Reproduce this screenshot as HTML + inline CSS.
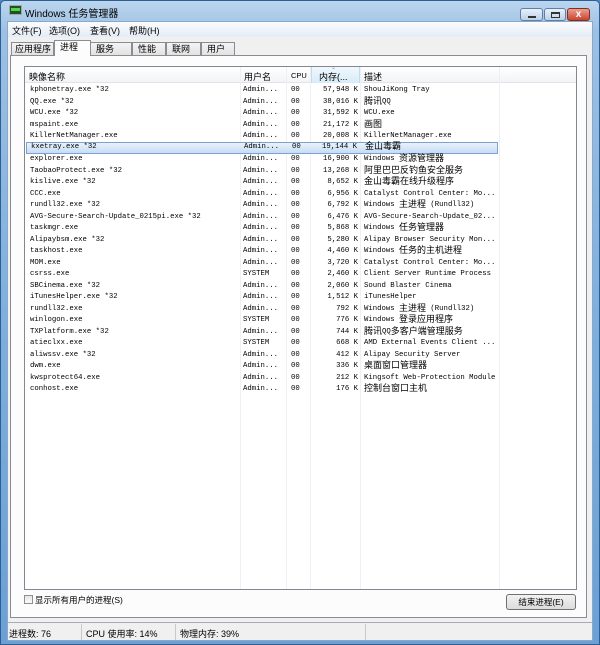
<!DOCTYPE html>
<html><head><meta charset="utf-8"><style>
*{margin:0;padding:0;box-sizing:border-box}
body{width:600px;height:645px;overflow:hidden;background:#4f86c0;font-family:"Liberation Sans","Noto Sans CJK SC",sans-serif;position:relative}
.a{position:absolute}
#frame{left:0;top:0;width:600px;height:645px;background:linear-gradient(#bcd6ee,#9cc0e4 30px,#7fb0de 300px,#6aa0d6);border:1px solid #2d5f92;border-radius:5px 5px 0 0}
#title{left:25px;top:5px;font-size:10px;color:#000}
#inner{left:7px;top:21px;width:586px;height:620px;background:#f0f0f0;border:1px solid #8aa8c8}
#menu{left:8px;top:22px;width:584px;height:15px;background:linear-gradient(#fbfcfe,#e4ecf6);font-size:9px}
#menu span{position:absolute;top:2px}
.tab{position:absolute;top:42px;height:14px;border:1px solid #898c95;border-bottom:none;background:linear-gradient(#f4f4f4,#e0e0e0);font-size:9px;line-height:12px;padding-left:3px}
#panel{left:10px;top:55px;width:577px;height:563px;background:#fcfcfc;border:1px solid #898c95}
#list{left:24px;top:66px;width:553px;height:524px;background:#fff;border:1px solid #828790}
#hdr{left:25px;top:67px;width:551px;height:16px;background:linear-gradient(#fff,#f3f4f6);border-bottom:1px solid #e0e3e8;font-size:9px}
.vl{position:absolute;top:67px;width:1px;height:522px;background:#eef0f3}
.r{position:absolute;left:26px;width:472px;height:11px;font-family:"Liberation Mono","Noto Sans CJK SC",monospace;font-size:7.3px;line-height:11px;white-space:nowrap;color:#000}
.r i{font-style:normal;position:absolute;top:0;height:11px;line-height:11px}
.r i.d{white-space:pre;display:flex;align-items:flex-start}
.r b{font-weight:normal;font-family:"Noto Sans CJK SC",sans-serif;font-size:9px;line-height:11px;height:11px;position:relative;top:-2px}
.n{left:4px}.u{left:217px}.c{left:265px}.m{right:140px;text-align:right}.d{left:338px}
.sel{background:linear-gradient(#e8f2fd,#c6dcf6);border:1px solid #7da2ce}
.sel i{top:-1px}
#btn{left:506px;top:594px;width:70px;height:16px;border:1px solid #707070;border-radius:3px;background:linear-gradient(#f2f2f2,#dcdcdc);font-size:8.5px;text-align:center;line-height:14px}
#status{left:8px;top:622px;width:584px;height:18px;background:#f0f0f0;border-top:1px solid #aab;font-size:9px}
#status span{position:absolute;top:4px}
.sd{position:absolute;top:1px;width:1px;height:16px;background:#c8c8c8}
</style></head><body>
<div id="frame" class="a"></div>
<div class="a" style="left:9px;top:5px;width:13px;height:10px;background:#2a4a2a;border:1px solid #9aa"></div>
<div class="a" style="left:11px;top:8px;width:9px;height:3px;background:#4d4"></div>
<div id="title" class="a">Windows 任务管理器</div>
<div class="a" style="left:520px;top:8px;width:23px;height:13px;border:1px solid #5f7fa8;border-radius:3px;background:linear-gradient(#e8f0fa,#bcd0e8)"><div class="a" style="left:7px;top:7px;width:8px;height:2px;background:#333"></div></div>
<div class="a" style="left:544px;top:8px;width:22px;height:13px;border:1px solid #5f7fa8;border-radius:3px;background:linear-gradient(#e8f0fa,#bcd0e8)"><div class="a" style="left:6px;top:3px;width:9px;height:6px;border:1px solid #333;border-top-width:2px"></div></div>
<div class="a" style="left:567px;top:8px;width:23px;height:13px;border:1px solid #8a2a1a;border-radius:3px;background:linear-gradient(#e8a090,#c8452e);color:#fff;font-size:10px;font-weight:bold;text-align:center;line-height:11px">x</div>
<div id="inner" class="a"></div>
<div id="menu" class="a"><span style="left:4px">文件(F)</span><span style="left:41px">选项(O)</span><span style="left:82px">查看(V)</span><span style="left:121px">帮助(H)</span></div>
<div class="tab" style="left:11px;width:43px">应用程序</div>
<div class="tab" style="left:90px;width:42px;padding-left:5px">服务</div>
<div class="tab" style="left:132px;width:34px;padding-left:5px">性能</div>
<div class="tab" style="left:166px;width:35px;padding-left:5px">联网</div>
<div class="tab" style="left:201px;width:34px;padding-left:5px">用户</div>
<div id="panel" class="a"></div>
<div class="tab" style="left:54px;top:40px;height:16px;width:37px;background:#fcfcfc;z-index:2;padding-left:5px">进程</div>
<div id="list" class="a"></div>
<div id="hdr" class="a">
<div class="a" style="left:286px;top:0;width:49px;height:16px;background:linear-gradient(#f0f8fd,#d8ecf8);border-left:1px solid #c0dcf0;border-right:1px solid #c0dcf0"></div>
<span class="a" style="left:4px;top:3px">映像名称</span><span class="a" style="left:219px;top:3px">用户名</span><span class="a" style="left:266px;top:4px;font-size:7.5px">CPU</span><span class="a" style="left:294px;top:3px">内存(...</span><span class="a" style="left:339px;top:3px">描述</span>
<span class="a" style="left:306px;top:-3px;font-size:6px;color:#6a8fb0">⌄</span>
</div>
<div class="vl" style="left:240px"></div><div class="vl" style="left:286px"></div><div class="vl" style="left:310px"></div><div class="vl" style="left:360px"></div><div class="vl" style="left:499px"></div>

<div class="r" style="top:85px"><i class="n">kphonetray.exe *32</i><i class="u">Admin...</i><i class="c">00</i><i class="m">57,948 K</i><i class="d">ShouJiKong Tray</i></div>
<div class="r" style="top:96.5px"><i class="n">QQ.exe *32</i><i class="u">Admin...</i><i class="c">00</i><i class="m">38,016 K</i><i class="d"><b>腾讯</b>QQ</i></div>
<div class="r" style="top:108px"><i class="n">WCU.exe *32</i><i class="u">Admin...</i><i class="c">00</i><i class="m">31,592 K</i><i class="d">WCU.exe</i></div>
<div class="r" style="top:119.5px"><i class="n">mspaint.exe</i><i class="u">Admin...</i><i class="c">00</i><i class="m">21,172 K</i><i class="d"><b>画图</b></i></div>
<div class="r" style="top:131px"><i class="n">KillerNetManager.exe</i><i class="u">Admin...</i><i class="c">00</i><i class="m">20,008 K</i><i class="d">KillerNetManager.exe</i></div>
<div class="r sel" style="top:142px;height:12px"><i class="n">kxetray.exe *32</i><i class="u">Admin...</i><i class="c">00</i><i class="m">19,144 K</i><i class="d"><b>金山毒霸</b></i></div>
<div class="r" style="top:154px"><i class="n">explorer.exe</i><i class="u">Admin...</i><i class="c">00</i><i class="m">16,900 K</i><i class="d">Windows <b>资源管理器</b></i></div>
<div class="r" style="top:165.5px"><i class="n">TaobaoProtect.exe *32</i><i class="u">Admin...</i><i class="c">00</i><i class="m">13,268 K</i><i class="d"><b>阿里巴巴反钓鱼安全服务</b></i></div>
<div class="r" style="top:177px"><i class="n">kislive.exe *32</i><i class="u">Admin...</i><i class="c">00</i><i class="m">8,652 K</i><i class="d"><b>金山毒霸在线升级程序</b></i></div>
<div class="r" style="top:188.5px"><i class="n">CCC.exe</i><i class="u">Admin...</i><i class="c">00</i><i class="m">6,956 K</i><i class="d">Catalyst Control Center: Mo...</i></div>
<div class="r" style="top:200px"><i class="n">rundll32.exe *32</i><i class="u">Admin...</i><i class="c">00</i><i class="m">6,792 K</i><i class="d">Windows <b>主进程</b> (Rundll32)</i></div>
<div class="r" style="top:211.5px"><i class="n">AVG-Secure-Search-Update_0215pi.exe *32</i><i class="u">Admin...</i><i class="c">00</i><i class="m">6,476 K</i><i class="d">AVG-Secure-Search-Update_02...</i></div>
<div class="r" style="top:223px"><i class="n">taskmgr.exe</i><i class="u">Admin...</i><i class="c">00</i><i class="m">5,868 K</i><i class="d">Windows <b>任务管理器</b></i></div>
<div class="r" style="top:234.5px"><i class="n">Alipaybsm.exe *32</i><i class="u">Admin...</i><i class="c">00</i><i class="m">5,280 K</i><i class="d">Alipay Browser Security Mon...</i></div>
<div class="r" style="top:246px"><i class="n">taskhost.exe</i><i class="u">Admin...</i><i class="c">00</i><i class="m">4,460 K</i><i class="d">Windows <b>任务的主机进程</b></i></div>
<div class="r" style="top:257.5px"><i class="n">MOM.exe</i><i class="u">Admin...</i><i class="c">00</i><i class="m">3,720 K</i><i class="d">Catalyst Control Center: Mo...</i></div>
<div class="r" style="top:269px"><i class="n">csrss.exe</i><i class="u">SYSTEM</i><i class="c">00</i><i class="m">2,460 K</i><i class="d">Client Server Runtime Process</i></div>
<div class="r" style="top:280.5px"><i class="n">SBCinema.exe *32</i><i class="u">Admin...</i><i class="c">00</i><i class="m">2,060 K</i><i class="d">Sound Blaster Cinema</i></div>
<div class="r" style="top:292px"><i class="n">iTunesHelper.exe *32</i><i class="u">Admin...</i><i class="c">00</i><i class="m">1,512 K</i><i class="d">iTunesHelper</i></div>
<div class="r" style="top:303.5px"><i class="n">rundll32.exe</i><i class="u">Admin...</i><i class="c">00</i><i class="m">792 K</i><i class="d">Windows <b>主进程</b> (Rundll32)</i></div>
<div class="r" style="top:315px"><i class="n">winlogon.exe</i><i class="u">SYSTEM</i><i class="c">00</i><i class="m">776 K</i><i class="d">Windows <b>登录应用程序</b></i></div>
<div class="r" style="top:326.5px"><i class="n">TXPlatform.exe *32</i><i class="u">Admin...</i><i class="c">00</i><i class="m">744 K</i><i class="d"><b>腾讯</b>QQ<b>多客户端管理服务</b></i></div>
<div class="r" style="top:338px"><i class="n">atieclxx.exe</i><i class="u">SYSTEM</i><i class="c">00</i><i class="m">668 K</i><i class="d">AMD External Events Client ...</i></div>
<div class="r" style="top:349.5px"><i class="n">aliwssv.exe *32</i><i class="u">Admin...</i><i class="c">00</i><i class="m">412 K</i><i class="d">Alipay Security Server</i></div>
<div class="r" style="top:361px"><i class="n">dwm.exe</i><i class="u">Admin...</i><i class="c">00</i><i class="m">336 K</i><i class="d"><b>桌面窗口管理器</b></i></div>
<div class="r" style="top:372.5px"><i class="n">kwsprotect64.exe</i><i class="u">Admin...</i><i class="c">00</i><i class="m">212 K</i><i class="d">Kingsoft Web-Protection Module</i></div>
<div class="r" style="top:384px"><i class="n">conhost.exe</i><i class="u">Admin...</i><i class="c">00</i><i class="m">176 K</i><i class="d"><b>控制台窗口主机</b></i></div>

<div class="a" style="left:24px;top:595px;width:9px;height:9px;border:1px solid #8f8f8f;background:linear-gradient(#e6e6e6,#fafafa)"></div>
<div class="a" style="left:35px;top:594px;font-size:8.5px">显示所有用户的进程(S)</div>
<div id="btn" class="a">结束进程(E)</div>
<div id="status" class="a"><span style="left:1px">进程数: 76</span><div class="sd" style="left:73px"></div><span style="left:78px">CPU 使用率: 14%</span><div class="sd" style="left:167px"></div><span style="left:172px">物理内存: 39%</span><div class="sd" style="left:357px"></div></div>
</body></html>
